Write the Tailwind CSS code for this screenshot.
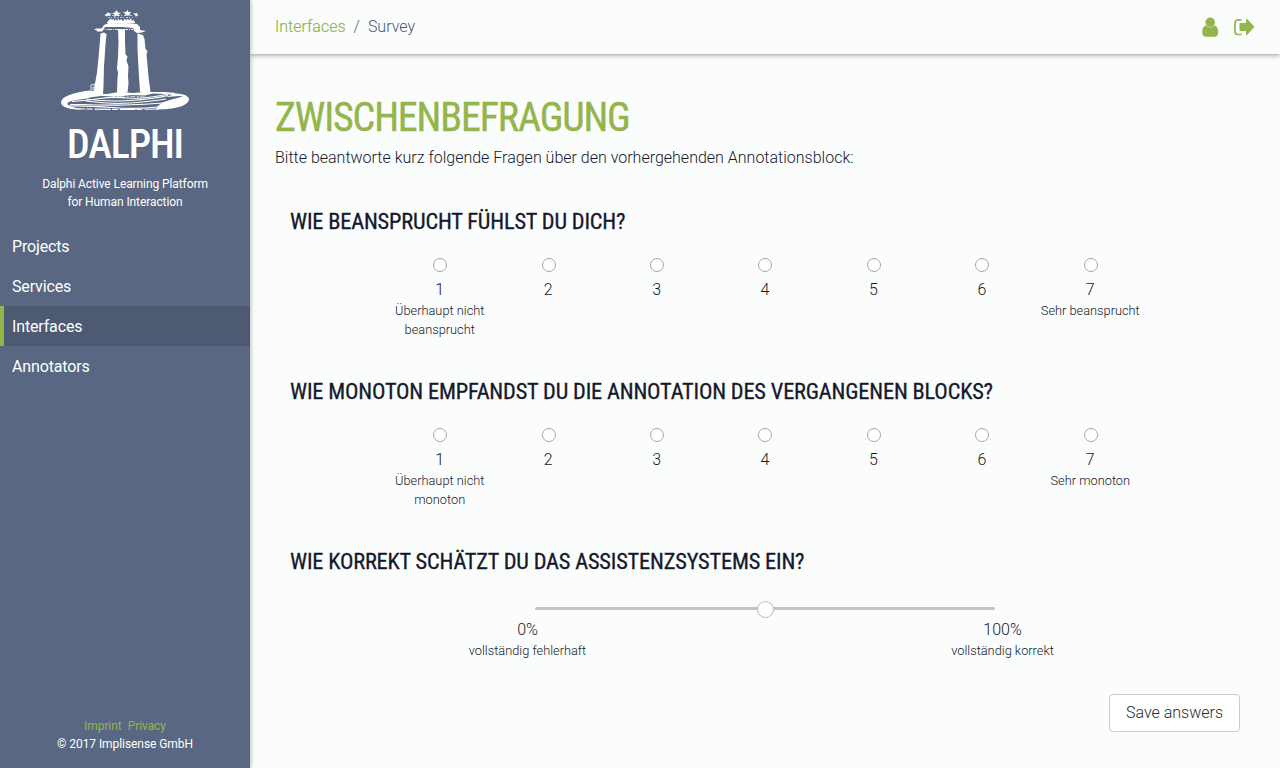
<!DOCTYPE html>
<html lang="de">
<head>
<meta charset="utf-8">
<title>Dalphi – Survey</title>
<script src="https://cdn.jsdelivr.net/npm/@tailwindcss/browser@4"></script>
</head>
<body class="flex h-[768px] w-[1280px] overflow-hidden bg-[#fbfdfd] font-['Roboto',sans-serif] text-base font-light text-[#16182b]">
<aside class="relative z-10 flex w-[250px] shrink-0 flex-col bg-[#5a6782] text-white shadow-[0_0_5px_rgba(0,0,0,0.35)]">
  <svg class="mx-auto mt-[8px] block h-[104px] w-[134px]" viewBox="58 8 134 104" fill="#fff">
    <path d="M104.500 15l2-1 1.500-2 1 1.500 3-.5-2 1.500 1 1.500-2.500-.5-2 1zM112 13l3-.5 1.500-2.500 1.500 2.500 3 .5-2.500 1.500.5 2-2.500-1-2.500 1.500.5-2.500zM123 12l3 0 1.500-2 1 2 3 .5-2 1.500.5 2-2.500-1-2.500 1 .5-2zM133 13l2.500.5 1.500-.5.5 1.500 1.500 1-2 0-1 1.500-1-2z"/>
    <path d="M109 20l2-1.500 1 1.500 2-1.500 0 2.500 2-2 1 2.500 1-3 2 2 1-1.500 2 2 2-2.500 1 2 2-2 1 2 2-2.500 1 3 2-1 1 3-27 1-1-1.500z"/>
    <path d="M106 15.500h27M108 17.500h25" fill="none" stroke="#fff" stroke-width=".6" stroke-dasharray="2 1 1 2"/>
    <path d="M102 28l2-3 5-2 7 .5 8-.5 9 .5 4 .5 3 3 0 3 6 1-4 1.500-5 .5-3-2-1-3-11-1-17 0-1 2-2 2.500-5 0-.5-1.500-2.500 0 2-1.500 5 0z"/>
    <path d="M105 29.500h28" fill="none" stroke="#fff" stroke-width=".8" stroke-dasharray="1 1 5 1"/>
    <path d="M100.500 33.500l3.500-1 2.500 1.500-1 10-.5 8-1 14-.5 20-.5 9-5 1-4.500-.5 1-9 2.500-14 2-20zM118 29l7 .5 0 13 .5 12 2 2-1 4 2 6-.5 9 .5 8-1 9-3 .5-7.500-.5.5-14 .5-6-1-4 1-12 .5-14zM137.500 33.500l5.500 1.500 1.500 4 1 10 2 2-1 4 1 10 1 12 2 15-1 2-9.500-2-.5-8-1-16-1-19z"/>
    <path d="M91 94v-9l4-1v3h-2v3l2 0v3l-3 0v3" fill="none" stroke="#fff" stroke-width=".8"/>
    <path d="M90 90.500C72 92.500 61 97 61 102.500 61 107 69 109.500 82 109.500l-11-3c-4-1.500-5-3.500-1-5 6-2 17-2 25-6l2-3zM156 109.500c2-5 7-8 14-9.500l13-3.500-4-.5-12 1c1-1 3-1.500 5-2l-6-2c12 0 23 1.500 23 6 0 7-15 10.500-33 10.500z"/>
    <path d="M84 93l10-2 3 3 10 0 12-2 14 1 12-1 20 0 10 1-10 1-12-.5-8 2-14-.5-12 1.500-18-.5-12 1.500z"/>
    <g fill="none" stroke="#fff" stroke-width="1.100"><path d="M72 101.500q15-1 28-3t28-.5 46-5"/><path d="M86 99q20 3 44 1.500t38-5"/><path d="M86 101q24 3.500 44 2t36-4"/><path d="M70 104.500h13q22 1 42 .5t38-2"/><path d="M67 106q20-.5 45 1.500t46-.5"/><path d="M70 108.500q40 1.500 88 .5" stroke-dasharray="16 1 6 2"/></g>
    <path d="M110 97l14-1 22 1" fill="none" stroke="#fff" stroke-width=".7" stroke-dasharray="5 2 2 1"/>
  </svg>
  <h1 class="mt-[9px] flex h-[48px] items-center justify-center text-[40px] font-medium tracking-[-1.1px]"><span class="font-['Roboto_Condensed','Roboto'] [font-stretch:75%]">DALPHI</span></h1>
  <p class="mt-[6px] text-center text-xs leading-[18px] font-normal tracking-[-0.09px]">Dalphi Active Learning Platform<br>for Human Interaction</p>
  <nav class="mt-[15px] flex flex-col font-normal leading-[41px] tracking-[-0.15px]">
    <a class="h-10 pl-3">Projects</a>
    <a class="h-10 pl-3">Services</a>
    <a class="h-10 border-l-4 border-[#93b54c] bg-[#4e5a71] pl-2">Interfaces</a>
    <a class="h-10 pl-3">Annotators</a>
  </nav>
  <footer class="mt-auto mb-[15px] text-center text-xs leading-[18px] font-normal tracking-[-0.07px]">
    <div class="flex justify-center gap-1.5 text-[#93b54c]"><a>Imprint</a><a>Privacy</a></div>
    <div>© 2017 Implisense GmbH</div>
  </footer>
</aside>
<div class="flex min-w-0 grow flex-col">
  <header class="flex h-[54px] items-center justify-between pr-[25px] pl-[25px] shadow-[0_1px_5px_rgba(0,0,0,0.4)]">
    <div class="flex gap-2 text-[#5a6782]"><a class="text-[#93b54c] [-webkit-text-stroke:0.2px]">Interfaces</a><span>/</span><span class="text-[#4c5873]">Survey</span></div>
    <div class="flex items-center gap-[15px] text-[#93b54c]">
      <svg class="h-5 w-[17px]" viewBox="0 0 17 20" fill="currentColor"><circle cx="8.200" cy="5.300" r="4.800"/><path d="M4 8.600C1.200 9.200.2 12.500.2 15.700.2 18 1.600 19.700 3.600 19.700h9.200c2 0 3.400-1.700 3.400-4C16.200 12.500 15.400 9.200 12.600 8.600a6 6 0 0 1-8.600 0z"/></svg>
      <svg class="h-5 w-[21px]" viewBox="0 0 21 20" fill="currentColor"><path d="M7.500 2.900H4A3 3 0 0 0 1 5.900v8.600a3 3 0 0 0 3 3h3.500" fill="none" stroke="currentColor" stroke-width="1.700"/><path d="M12 2.700c0-.8.700-1 1.300-.5l6.600 7.100c.4.400.4.900 0 1.300l-6.600 7.100c-.6.500-1.300.3-1.300-.5v-3.300H6.500c-.6 0-1-.4-1-1V7.100c0-.6.400-1 1-1H12z"/></svg>
    </div>
  </header>
  <main class="flex grow flex-col px-[25px] pt-10">
    <h2 class="flex h-12 items-center text-[40px] font-normal tracking-[-1.13px] text-[#93b54c] [-webkit-text-stroke:0.4px]"><span class="font-['Roboto_Condensed','Roboto'] [font-stretch:75%]">ZWISCHENBEFRAGUNG</span></h2>
    <p class="mt-1 leading-6">Bitte beantworte kurz folgende Fragen über den vorhergehenden Annotationsblock:</p>
    <div class="px-[15px]">
      <section class="mt-[38px] h-[132px]">
        <h3 class="flex h-7 items-center text-[22.400px] font-normal tracking-[-0.18px] [-webkit-text-stroke:0.3px]"><span class="font-['Roboto_Condensed','Roboto'] [font-stretch:75%]">WIE BEANSPRUCHT FÜHLST DU DICH?</span></h3>
        <div class="mx-auto mt-[22px] grid w-[759px] grid-cols-7 text-center">
          <div class="flex flex-col items-center"><i class="ml-px size-3.5 rounded-full border border-[#a6a6a6] bg-white"></i><span class="mt-[6px] h-[23px] leading-6">1</span><small class="text-[12.800px] leading-[19px]">Überhaupt nicht<br>beansprucht</small></div>
          <div class="flex flex-col items-center"><i class="ml-px size-3.5 rounded-full border border-[#a6a6a6] bg-white"></i><span class="mt-[6px] h-[23px] leading-6">2</span></div>
          <div class="flex flex-col items-center"><i class="ml-px size-3.5 rounded-full border border-[#a6a6a6] bg-white"></i><span class="mt-[6px] h-[23px] leading-6">3</span></div>
          <div class="flex flex-col items-center"><i class="ml-px size-3.5 rounded-full border border-[#a6a6a6] bg-white"></i><span class="mt-[6px] h-[23px] leading-6">4</span></div>
          <div class="flex flex-col items-center"><i class="ml-px size-3.5 rounded-full border border-[#a6a6a6] bg-white"></i><span class="mt-[6px] h-[23px] leading-6">5</span></div>
          <div class="flex flex-col items-center"><i class="ml-px size-3.5 rounded-full border border-[#a6a6a6] bg-white"></i><span class="mt-[6px] h-[23px] leading-6">6</span></div>
          <div class="flex flex-col items-center"><i class="ml-px size-3.5 rounded-full border border-[#a6a6a6] bg-white"></i><span class="mt-[6px] h-[23px] leading-6">7</span><small class="text-[12.800px] leading-[19px]">Sehr beansprucht</small></div>
        </div>
      </section>
      <section class="mt-[38px] h-[132px]">
        <h3 class="flex h-7 items-center text-[22.400px] font-normal tracking-[-0.18px] [-webkit-text-stroke:0.3px]"><span class="font-['Roboto_Condensed','Roboto'] [font-stretch:75%]">WIE MONOTON EMPFANDST DU DIE ANNOTATION DES VERGANGENEN BLOCKS?</span></h3>
        <div class="mx-auto mt-[22px] grid w-[759px] grid-cols-7 text-center">
          <div class="flex flex-col items-center"><i class="ml-px size-3.5 rounded-full border border-[#a6a6a6] bg-white"></i><span class="mt-[6px] h-[23px] leading-6">1</span><small class="text-[12.800px] leading-[19px]">Überhaupt nicht<br>monoton</small></div>
          <div class="flex flex-col items-center"><i class="ml-px size-3.5 rounded-full border border-[#a6a6a6] bg-white"></i><span class="mt-[6px] h-[23px] leading-6">2</span></div>
          <div class="flex flex-col items-center"><i class="ml-px size-3.5 rounded-full border border-[#a6a6a6] bg-white"></i><span class="mt-[6px] h-[23px] leading-6">3</span></div>
          <div class="flex flex-col items-center"><i class="ml-px size-3.5 rounded-full border border-[#a6a6a6] bg-white"></i><span class="mt-[6px] h-[23px] leading-6">4</span></div>
          <div class="flex flex-col items-center"><i class="ml-px size-3.5 rounded-full border border-[#a6a6a6] bg-white"></i><span class="mt-[6px] h-[23px] leading-6">5</span></div>
          <div class="flex flex-col items-center"><i class="ml-px size-3.5 rounded-full border border-[#a6a6a6] bg-white"></i><span class="mt-[6px] h-[23px] leading-6">6</span></div>
          <div class="flex flex-col items-center"><i class="ml-px size-3.5 rounded-full border border-[#a6a6a6] bg-white"></i><span class="mt-[6px] h-[23px] leading-6">7</span><small class="text-[12.800px] leading-[19px]">Sehr monoton</small></div>
        </div>
      </section>
      <section class="mt-[38px]">
        <h3 class="flex h-7 items-center text-[22.400px] font-normal tracking-[-0.18px] [-webkit-text-stroke:0.3px]"><span class="font-['Roboto_Condensed','Roboto'] [font-stretch:75%]">WIE KORREKT SCHÄTZT DU DAS ASSISTENZSYSTEMS EIN?</span></h3>
        <div class="relative mx-auto mt-[31px] h-[3px] w-[460px] rounded-full bg-[#c2c4c4]"><i class="absolute top-[-6px] left-[222px] size-[17px] rounded-full border border-[#bbb] bg-white"></i></div>
        <div class="mt-2 grid grid-cols-2 text-center">
          <div class="flex flex-col"><span class="h-[23px] leading-6">0%</span><small class="text-[12.800px] leading-[19px]">vollständig fehlerhaft</small></div>
          <div class="flex flex-col"><span class="h-[23px] leading-6">100%</span><small class="text-[12.800px] leading-[19px]">vollständig korrekt</small></div>
        </div>
      </section>
      <div class="mt-[34px] flex justify-end"><button class="h-[38px] w-[131px] rounded border border-[#ccc] bg-white text-[#292b2c]">Save answers</button></div>
    </div>
  </main>
</div>
</body>
</html>
